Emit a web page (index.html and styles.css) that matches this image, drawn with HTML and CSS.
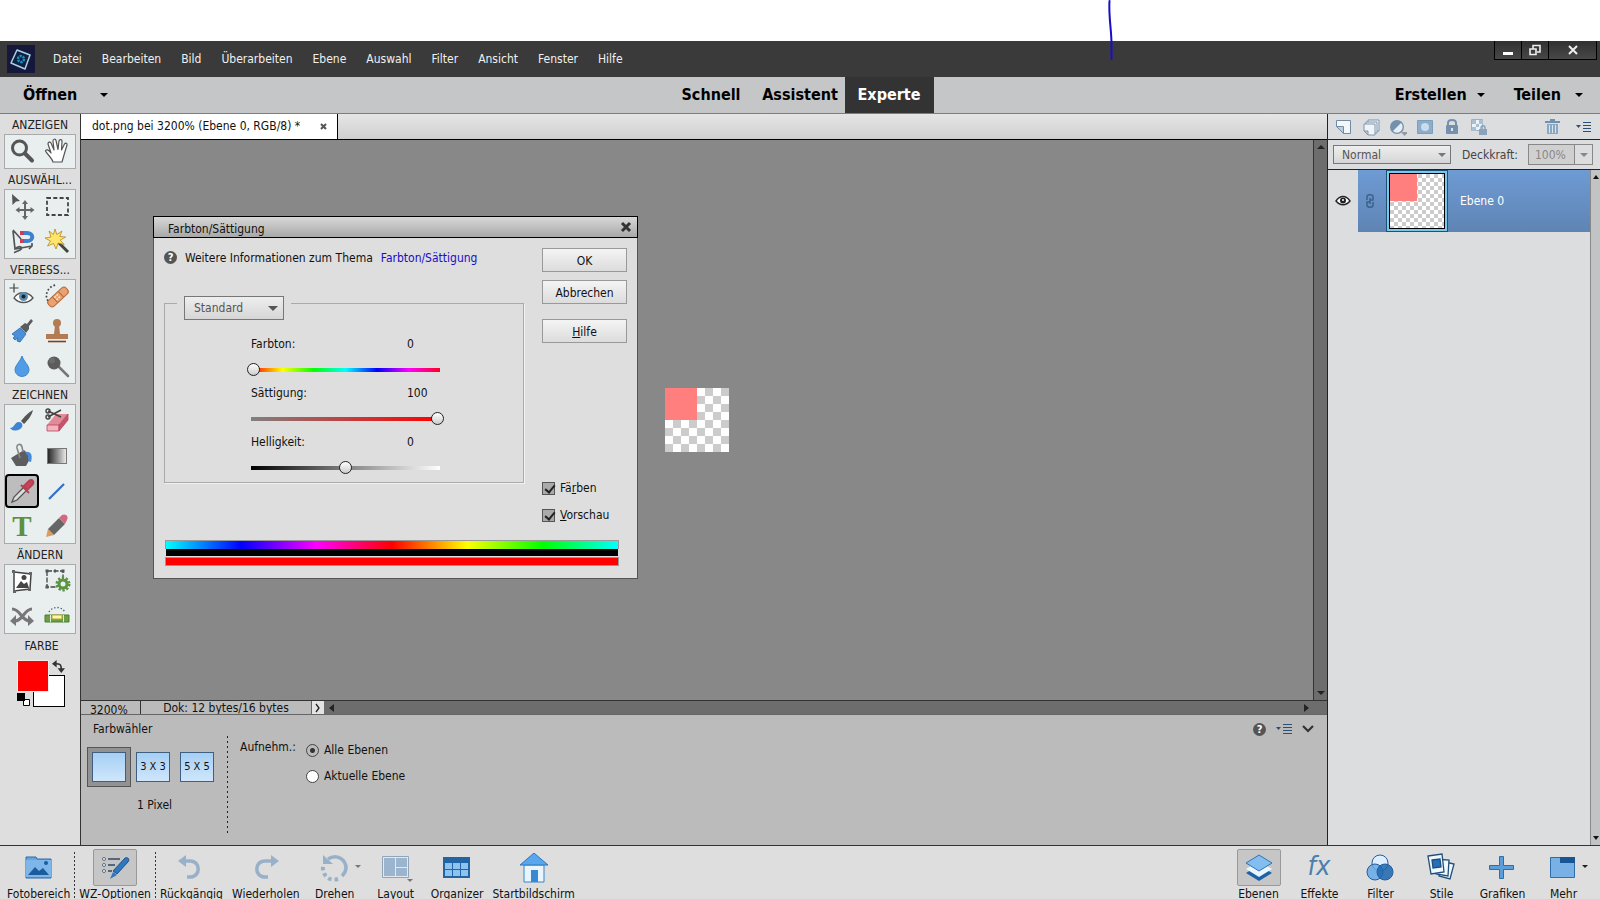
FILE: index.html
```html
<!DOCTYPE html>
<html lang="de">
<head>
    <meta charset="UTF-8">
    <meta name="viewport" content="width=device-width, initial-scale=1.0">
    <title>dot.png bei 3200% (Ebene 0, RGB/8)</title>
    <link rel="stylesheet" href="styles.css">
</head>
<body>

    <svg class="pen-mark" viewBox="0 0 8 62" aria-hidden="true"><path d="M2.500 1C1.500 16 4.500 30 4.500 44V59" fill="none" stroke="#1a0cc8" stroke-width="2" stroke-linecap="round"/></svg>

    <header class="menubar">
        <svg class="logo" viewBox="0 0 28 28" aria-hidden="true">
            <rect width="28" height="28" fill="#15183a"/>
            <path d="M10 5l13 5-5 14-14-6z" fill="#0e2240" stroke="#a9d0ea" stroke-width="1.500" stroke-linejoin="round"/>
            <circle cx="14" cy="14" r="3" fill="none" stroke="#1b8fc4" stroke-width="2.500" stroke-dasharray="2.200 .9"/>
        </svg>
        <nav class="menu">
            <a href="#">Datei</a>
            <a href="#">Bearbeiten</a>
            <a href="#">Bild</a>
            <a href="#">Überarbeiten</a>
            <a href="#">Ebene</a>
            <a href="#">Auswahl</a>
            <a href="#">Filter</a>
            <a href="#">Ansicht</a>
            <a href="#">Fenster</a>
            <a href="#">Hilfe</a>
        </nav>
        <div class="window-controls">
            <button aria-label="Minimieren"><svg width="12" height="12" viewBox="0 0 12 12"><path d="M1 9.500h10" stroke="#fff" stroke-width="3"/></svg></button>
            <button aria-label="Wiederherstellen"><svg width="12" height="12" viewBox="0 0 12 12" fill="none" stroke="#eee" stroke-width="1.600"><path d="M4 5V1.500h7V8H8"/><path d="M1 5h6v5.500H1z"/></svg></button>
            <button class="close" aria-label="Schließen"><svg width="12" height="12" viewBox="0 0 12 12"><path d="M2 2l8 8M10 2l-8 8" stroke="#eee" stroke-width="2"/></svg></button>
        </div>
    </header>

    <div class="modebar">
        <button class="open">Öffnen <i class="arrow"></i></button>
        <div class="modes">
            <button>Schnell</button>
            <button>Assistent</button>
            <button class="active">Experte</button>
        </div>
        <div class="mode-right">
            <button>Erstellen <i class="arrow"></i></button>
            <button class="share">Teilen <i class="arrow"></i></button>
        </div>
    </div>

    <main>
        <!-- Werkzeuge -->
        <aside class="tools">
            <h2>ANZEIGEN</h2>
            <div class="toolbox">
                <button aria-label="Zoom"><svg viewBox="0 0 30 30"><circle cx="12.500" cy="12" r="7" fill="#e9eeee" stroke="#555" stroke-width="3"/><path d="M18 17.500l7 7" stroke="#555" stroke-width="4" stroke-linecap="round"/></svg></button>
                <button aria-label="Hand"><svg viewBox="0 0 30 30"><path d="M11 26c-1-4-6-8-7.500-11 .5-2 3-1.500 5.500 2L6 8c0-2 2-2.500 3-1l3 7-1-9c0-2 2.500-2.500 3-.5l2 9 1-8.500c.5-2 3-1.500 3 0l-.5 9 3-6c1-1.500 3-.5 2.500 1l-3 10-2 7z" fill="#fff" stroke="#555" stroke-width="1.200" stroke-linejoin="round"/></svg></button>
            </div>
            <h2>AUSWÄHL...</h2>
            <div class="toolbox">
                <button aria-label="Verschieben"><svg viewBox="0 0 30 30"><path d="M5 3l8 7-4 .5-3.500 3.500z" fill="#555"/><path d="M18 12v14M11 19h14" stroke="#666" stroke-width="2"/><path d="M18 9l3 4h-6zM18 29l3-4h-6zM8.500 19l4-3v6zM27.500 19l-4-3v6z" fill="#666"/></svg></button>
                <button aria-label="Auswahlrechteck"><svg viewBox="0 0 30 30"><rect x="5" y="7" width="21" height="17" fill="none" stroke="#444" stroke-width="1.800" stroke-dasharray="4 2.300"/></svg></button>
                <button aria-label="Magnetisches Lasso"><svg viewBox="0 0 30 30"><path d="M6 4l8 9M6 5l2 18 17-3M8 23c5-5 9-1 5 1s-6 2-5 3M25 17v3l-3 3" fill="none" stroke="#555" stroke-width="1.700"/><path d="M17 7h3c7 0 7 8 0 8h-3" fill="none" stroke="#3c80cf" stroke-width="4"/><path d="M13 7h4M13 15h4" stroke="#d23a55" stroke-width="4"/></svg></button>
                <button aria-label="Zauberstab"><svg viewBox="0 0 30 30"><path d="M16 16l10 10" stroke="#444" stroke-width="3"/><path d="M13 3l1.800 5.500L20 5l-2.300 5.500 6 .5-5.500 3 4 4.500-6-1.500L14 23l-2.500-5.500L5.500 20l3-5L3 12l6-1-2-6 4.500 3.500z" fill="#ffe56a" stroke="#b8891c" stroke-width=".8"/></svg></button>
            </div>
            <h2>VERBESS...</h2>
            <div class="toolbox">
                <button aria-label="Rote Augen entfernen"><svg viewBox="0 0 30 30"><path d="M7 2.500v9M2.500 7h9" stroke="#444" stroke-width="1.200"/><path d="M7 17c4-7 14-7 19 0-5 6-14 6-19 0z" fill="#fff" stroke="#555" stroke-width="1.300"/><circle cx="16.500" cy="15.500" r="4.500" fill="#5d8cb3"/><circle cx="16.500" cy="15.500" r="2" fill="#222"/></svg></button>
                <button aria-label="Bereichsreparatur"><svg viewBox="0 0 30 30"><path d="M6 20C2 14 6 5 14 4" fill="none" stroke="#444" stroke-width="1.700" stroke-dasharray="1.700 2"/><g transform="rotate(-43 16 16)"><rect x="4" y="12" width="24" height="8" rx="3" fill="#e8a273" stroke="#b66b3b"/><path d="M12 12v8M20 12v8" stroke="#b66b3b"/><path d="M13 14h6M13 17h6" stroke="#fff1dd" stroke-width="1.500" stroke-dasharray="1.500"/></g></svg></button>
                <button aria-label="Smartpinsel"><svg viewBox="0 0 30 30"><path d="M5 18l8-6 6 6-6 8-3-1 1-3-3 2-2-2 2-2z" fill="#4a8fd8" stroke="#286ab0" stroke-width=".8"/><path d="M13 11l5-4 2 1 4-5 2 2-4 5v3l-3 4z" fill="#5c5c5c"/></svg></button>
                <button aria-label="Kopierstempel"><svg viewBox="0 0 30 30"><circle cx="15" cy="7" r="4" fill="#b27b54"/><path d="M13 9h4l1 9h8v5H4v-5h8z" fill="#b27b54"/><path d="M6 25.500h18" stroke="#7a4522" stroke-width="1.600"/></svg></button>
                <button aria-label="Weichzeichner"><svg viewBox="0 0 30 30"><path d="M15 5c2 6 7 9 7 14a7 6.500 0 0 1-14 0c0-5 5-8 7-14z" fill="#519ce6" stroke="#2d76bd" stroke-width=".8"/></svg></button>
                <button aria-label="Schwamm"><svg viewBox="0 0 30 30"><path d="M16 15l10 10" stroke="#777" stroke-width="2.500" stroke-linecap="round"/><circle cx="12" cy="12" r="6.500" fill="#5c5c5c"/><circle cx="10" cy="9.500" r="3" fill="#6c6c6c"/></svg></button>
            </div>
            <h2>ZEICHNEN</h2>
            <div class="toolbox">
                <button aria-label="Pinsel"><svg viewBox="0 0 30 30"><path d="M26 4c-4 2-9 7-12 11l3 3c4-4 8-9 9-14z" fill="#555"/><path d="M3 22c5 0 4-6 9-6 3 0 4 3 3 5-2 4-9 5-12 1z" fill="#3e84d2"/></svg></button>
                <button aria-label="Radiergummi"><svg viewBox="0 0 30 30"><path d="M5 19l9-11h12l-9 11z" fill="#e28a98"/><path d="M5 19h12v6H5z" fill="#f3b4be" stroke="#b64560" stroke-width=".8"/><path d="M17 19l9-11v6l-9 11z" fill="#c9526a" stroke="#b64560" stroke-width=".8"/><path d="M6 5l13 6M6 11l13-7" stroke="#444" stroke-width="1.600"/><circle cx="6" cy="5" r="2" fill="none" stroke="#444" stroke-width="1.400"/><circle cx="6" cy="11" r="2" fill="none" stroke="#444" stroke-width="1.400"/></svg></button>
                <button aria-label="Füllwerkzeug"><svg viewBox="0 0 30 30"><path d="M4 17l13-8 7 7-5 9H9z" fill="#5d5d5d"/><path d="M13 17L10 7c-1-4 4-5 5-1l1 5" fill="none" stroke="#888" stroke-width="1.600"/><path d="M18 11c6-1 8 3 6 10-3 0-3-3-3-6z" fill="#438bd9"/></svg></button>
                <button aria-label="Verlauf"><svg viewBox="0 0 30 30"><defs><linearGradient id="toolGrad"><stop offset="0" stop-color="#222"/><stop offset="1" stop-color="#eee"/></linearGradient></defs><rect x="5.500" y="7.500" width="19" height="15" fill="url(#toolGrad)" stroke="#777"/></svg></button>
                <button class="selected" aria-label="Farbwähler"><svg viewBox="0 0 30 30"><path d="M5 26l2-5 10-10 3 3-10 10z" fill="#ddd" stroke="#555" stroke-width="1.300"/><path d="M14 9l8 8M17 10l5-5c3-3 6 1 3 4l-5 5z" fill="#c8455a" stroke="#b83f53" stroke-width="2"/></svg></button>
                <button aria-label="Linie"><svg viewBox="0 0 30 30"><path d="M7 23L22 8" stroke="#2f6fc6" stroke-width="2.200"/></svg></button>
                <button aria-label="Text"><svg viewBox="0 0 30 30"><text x="15" y="25" text-anchor="middle" class="glyph-t">T</text></svg></button>
                <button aria-label="Buntstift"><svg viewBox="0 0 30 30"><path d="M4 26l2-8 6 6z" fill="#d99c62"/><path d="M6 18l11-11 6 6-11 11z" fill="#666"/><path d="M17 7l3-3c4-2 7 2 5 5l-2 4z" fill="#d16a7f"/></svg></button>
            </div>
            <h2>ÄNDERN</h2>
            <div class="toolbox">
                <button aria-label="Neu zusammensetzen"><svg viewBox="0 0 30 30" fill="none" stroke="#444" stroke-width="1.500"><path d="M7 6l17 2-1 15-16 2z" fill="#fff"/><path d="M9 22l5-7 3 3 3-2 2 6z" fill="#444" stroke="none"/><circle cx="17" cy="11.500" r="2.500" fill="#444" stroke="none"/><path d="M5 4h3v3H5zM22 6h3v3h-3zM21 22h3v3h-3zM6 24h3v3H6z" fill="#666" stroke="none"/></svg></button>
                <button aria-label="Freistellen"><svg viewBox="0 0 30 30"><path d="M5 5h16v8M5 5v16h9" fill="none" stroke="#444" stroke-width="1.300" stroke-dasharray="5 1.500"/><path d="M3.500 3.500h3v3h-3zM19.500 3.500h3v3h-3zM3.500 19.500h3v3h-3zM12 3.500h2v3h-2z" fill="#555"/><circle cx="21" cy="18" r="5.500" fill="#5b9342"/><circle cx="21" cy="18" r="6" fill="none" stroke="#5b9342" stroke-width="3" stroke-dasharray="2.200 1.570"/><circle cx="21" cy="18" r="2.500" fill="#e9eeee"/></svg></button>
                <button aria-label="Inhaltssensitives Verschieben"><svg viewBox="0 0 30 30" fill="none" stroke="#777" stroke-width="3"><path d="M5 8c9 0 9 12 18 12M25 8c-8 0-9 12-17 12"/><path d="M21 14l6 6-6 5zM9 14l-6 6 6 5z" fill="#777" stroke="none"/></svg></button>
                <button aria-label="Gerade-ausrichten"><svg viewBox="0 0 30 30"><path d="M7 11c4-6 12-6 16 0" fill="none" stroke="#35597d" stroke-width="1.300" stroke-dasharray="1.300 2"/><path d="M3 14h24v7H3z" fill="#6c9f45" stroke="#4f7d2e"/><path d="M10 14h10v4h-10z" fill="#fff6a8" stroke="#b2a43c"/><path d="M8.500 14v7M21.500 14v7" stroke="#dfe9d5"/></svg></button>
            </div>
            <h2 class="color-title">FARBE</h2>
            <div class="swatches">
                <span class="bg-color"></span>
                <span class="fg-color"></span>
                <svg class="swap" viewBox="0 0 14 14"><path d="M4 4c5 0 6 1 6 6" fill="none" stroke="#333" stroke-width="1.800"/><path d="M0 4l5-4v8zM10 14L6 9h8z" fill="#333"/></svg>
                <svg class="reset" viewBox="0 0 14 14"><path d="M6.500 6.500h6v6h-6z" fill="#fff" stroke="#000"/><path d="M0 0h8v8H0z"/></svg>
            </div>
        </aside>

        <!-- Dokument -->
        <section class="document">
            <div class="tabs">
                <div class="tab">dot.png bei 3200% (Ebene 0, RGB/8) * <button aria-label="Tab schließen"><svg width="7" height="7" viewBox="0 0 7 7"><path d="M1 1l5 5M6 1L1 6" stroke="#555" stroke-width="2"/></svg></button></div>
            </div>

            <div class="canvas-row">
                <div class="canvas">
                    <div class="artwork checker"></div>

                    <form class="dialog" role="dialog" aria-labelledby="dialog-title">
                        <div class="dialog-title">
                            <span id="dialog-title">Farbton/Sättigung</span>
                            <button type="button" aria-label="Schließen"><svg width="12" height="12" viewBox="0 0 12 12"><path d="M2 2l8 8M10 2l-8 8" stroke="#333" stroke-width="3"/></svg></button>
                        </div>
                        <div class="dialog-body">
                            <div class="dialog-main">
                                <p class="help-line"><span class="help">?</span><span>Weitere Informationen zum Thema</span> <a href="#">Farbton/Sättigung</a></p>
                                <fieldset>
                                    <legend>
                                        <select aria-label="Bereich" class="select-range"><option>Standard</option></select>
                                    </legend>
                                    <div class="slider-row">
                                        <label for="hue">Farbton:</label><output for="hue">0</output>
                                        <input type="range" id="hue" class="hue" min="0" max="360" value="0">
                                    </div>
                                    <div class="slider-row">
                                        <label for="sat">Sättigung:</label><output for="sat">100</output>
                                        <input type="range" id="sat" class="sat" min="0" max="100" value="100">
                                    </div>
                                    <div class="slider-row">
                                        <label for="light">Helligkeit:</label><output for="light">0</output>
                                        <input type="range" id="light" class="light" min="-100" max="100" value="0">
                                    </div>
                                </fieldset>
                            </div>
                            <div class="dialog-side">
                                <button type="button">OK</button>
                                <button type="button">Abbrechen</button>
                                <button type="button" class="spaced"><u>H</u>ilfe</button>
                                <div class="checks">
                                    <label><input type="checkbox" checked> <span>Fä<u>r</u>ben</span></label>
                                    <label><input type="checkbox" checked> <span><u>V</u>orschau</span></label>
                                </div>
                            </div>
                        </div>
                        <div class="strips">
                            <div class="strip-hue"></div>
                            <div class="strip-black"></div>
                            <div class="strip-red"></div>
                        </div>
                    </form>
                </div>
                <div class="vscroll"><i class="arrow up"></i><i class="arrow"></i></div>
            </div>

            <div class="statusbar">
                <span class="zoom">3200%</span>
                <span class="docsize">Dok: 12 bytes/16 bytes</span>
                <button class="status-more" aria-label="Mehr"><svg width="6" height="10" viewBox="0 0 6 10"><path d="M1 1l3 4-3 4" fill="none" stroke="#222" stroke-width="1.300"/></svg></button>
                <div class="hscroll"><i class="arrow left"></i><i class="arrow right"></i></div>
            </div>

            <div class="options">
                <div class="options-head">
                    <span>Farbwähler</span>
                    <div class="options-icons">
                        <span class="help">?</span>
                        <svg width="16" height="12" viewBox="0 0 16 12"><path d="M0 4h5L2.500 7z" fill="#2c4f7a"/><path d="M7 1.500h9M7 4.500h9M7 7.500h9M7 10.500h9" stroke="#2c4f7a"/></svg>
                        <svg width="12" height="8" viewBox="0 0 12 8"><path d="M1 1l5 5 5-5" fill="none" stroke="#333" stroke-width="2.200"/></svg>
                    </div>
                </div>
                <div class="options-body">
                    <div class="samples">
                        <div class="sample-buttons">
                            <button class="active" aria-label="1 Pixel"><span></span></button>
                            <button><span>3 X 3</span></button>
                            <button><span>5 X 5</span></button>
                        </div>
                        <p>1 Pixel</p>
                    </div>
                    <div class="sample-layers">
                        <span>Aufnehm.:</span>
                        <div>
                            <label><input type="radio" name="layers" checked> Alle Ebenen</label>
                            <label><input type="radio" name="layers"> Aktuelle Ebene</label>
                        </div>
                    </div>
                </div>
            </div>
        </section>

        <!-- Ebenenbedienfeld -->
        <aside class="layers">
            <div class="layer-icons">
                <button aria-label="Neue Ebene"><svg viewBox="0 0 18 18"><path d="M1.500 2.500h14v13h-7l-7-7z" fill="#f4f7fa" stroke="#6f8ba6"/><path d="M1.500 8.500h7v7z" fill="#bccddd" stroke="#6f8ba6"/></svg></button>
                <button aria-label="Neue Gruppe"><svg viewBox="0 0 18 18" fill="#f1f4f7" stroke="#7d96ae"><path d="M6 2h11v11H6z"/><path d="M4 4h11v11H4z"/><path d="M2 6h11v11H6l-4-4z"/><path d="M2 13h4v4z" fill="#bccddd"/></svg></button>
                <button aria-label="Einstellungsebene"><svg viewBox="0 0 18 18"><circle cx="8" cy="9" r="7" fill="#7390ac"/><path d="M12 5a5.500 5.500 0 0 1-8 8z" fill="#e6eef5"/><path d="M12 14h7l-3.500 4z" fill="#999"/></svg></button>
                <button aria-label="Ebenenmaske"><svg viewBox="0 0 18 18"><path d="M1.500 2.500h15v13h-15z" fill="#8cadcb" stroke="#7c9fbf"/><circle cx="9" cy="9" r="4" fill="#c9dcec"/></svg></button>
                <button aria-label="Alle sperren"><svg viewBox="0 0 18 18"><path d="M5 9V5c0-4 8-4 8 0v4" fill="none" stroke="#7390ac" stroke-width="2"/><rect x="3" y="7" width="12" height="9" rx="1" fill="#7390ac"/><path d="M9 10v3" stroke="#dce5ec" stroke-width="2"/></svg></button>
                <button aria-label="Transparente Pixel sperren"><svg viewBox="0 0 18 18"><path d="M1.500 1.500h11v11h-11z" fill="#edf2f6" stroke="#9ab0c5"/><path d="M2 2h4v4H2zM9 2h4v4H9zM6 6h3v3H6zM2 9h4v4H2z" fill="#a9bfd3"/><path d="M11 12v-2c0-3 4-3 4 0v2" fill="none" stroke="#8aa3bb" stroke-width="1.500"/><path d="M9 11h8v6H9z" fill="#8aa3bb"/></svg></button>
                <button class="trash" aria-label="Löschen"><svg viewBox="0 0 18 18"><path d="M1 4h15M6 2h5" stroke="#7390ac" stroke-width="2"/><path d="M3 6h11v10H3z" fill="#8aa8c4"/><path d="M5.500 7v8M8.500 7v8M11.500 7v8" stroke="#d8e3ec"/></svg></button>
                <button aria-label="Bedienfeldmenü"><svg viewBox="0 0 18 18"><path d="M1 7h5l-2.500 3z" fill="#2c4f7a"/><path d="M8 4.500h8M8 7.500h8M8 10.500h8M8 13.500h8" stroke="#2c4f7a"/></svg></button>
            </div>
            <div class="blend">
                <select aria-label="Mischmodus" class="select-blend"><option>Normal</option></select>
                <label for="opacity">Deckkraft:</label>
                <div class="opacity">
                    <input type="text" id="opacity" value="100%">
                    <button aria-label="Deckkraft wählen"><i class="arrow"></i></button>
                </div>
            </div>
            <div class="layer-area">
                <div class="layer-list">
                    <div class="layer">
                        <button class="eye" aria-label="Sichtbar"><svg width="16" height="12" viewBox="0 0 16 12"><path d="M1 6c4-6 10-6 14 0-4 5-10 5-14 0z" fill="#fff" stroke="#222" stroke-width="1.400"/><circle cx="8" cy="5.500" r="3" fill="#222"/><circle cx="8" cy="5" r="1" fill="#fff"/></svg></button>
                        <div class="layer-row">
                            <svg width="8" height="14" viewBox="0 0 8 14" fill="none" stroke="#3f648f" stroke-width="1.600"><path d="M1 6V3c0-3 6-3 6 0v3H4M7 8v3c0 3-6 3-6 0V8h3M4 4v6"/></svg>
                            <span class="thumb"><span class="checker"></span></span>
                            <span>Ebene 0</span>
                        </div>
                    </div>
                </div>
                <div class="panel-scroll"><i class="arrow up"></i><i class="arrow"></i></div>
            </div>
        </aside>
    </main>

    <footer class="taskbar">
        <div class="task-left">
            <button><span class="ico"><svg viewBox="0 0 30 30"><path d="M2 4h10l1 2h14v19H2z" fill="#69a5dc" stroke="#2b6aa6"/><path d="M2 7h25v17H2z" fill="#7eb6ea"/><path d="M4 22l7-8 4 4 4-3 6 7z" fill="#1c5c9c"/><circle cx="22" cy="10" r="2" fill="#1c5c9c"/></svg></span>Fotobereich</button>
            <button class="divided"><span class="ico on"><svg viewBox="0 0 30 30"><path d="M8 6h12M8 12h7M8 18h4" stroke="#56677a" stroke-width="2"/><circle cx="4" cy="6" r="1.500" fill="#fff" stroke="#56677a"/><circle cx="4" cy="12" r="1.500" fill="#fff" stroke="#56677a"/><circle cx="4" cy="18" r="1.500" fill="#fff" stroke="#56677a"/><path d="M25 5c3-1 5 1 3 4L17 21l-4-3z" fill="#3277bd" stroke="#1e558f"/><path d="M13 19l4 3-7 4z" fill="#3277bd"/></svg></span>WZ-Optionen</button>
            <button class="divided"><span class="ico faded"><svg viewBox="0 0 30 30"><path d="M5 8h9c11 0 11 16 0 16h-3" fill="none" stroke="#6c94bb" stroke-width="3.500"/><path d="M2 8l8-6v12z" fill="#6c94bb"/></svg></span>Rückgängig</button>
            <button><span class="ico faded"><svg viewBox="0 0 30 30"><path d="M23 8h-9c-11 0-11 16 0 16h3" fill="none" stroke="#6c94bb" stroke-width="3.500"/><path d="M28 8l-8-6v12z" fill="#6c94bb"/></svg></span>Wiederholen</button>
            <button><span class="ico faded has-arrow"><svg viewBox="0 0 30 30"><path d="M8 6c9-6 18 1 18 9 0 3-2 6-4 8" fill="none" stroke="#6c94bb" stroke-width="3.500"/><path d="M18 26C8 29 2 21 3 13" fill="none" stroke="#6c94bb" stroke-width="4" stroke-dasharray="3.500 3"/><path d="M3 2v9h10z" fill="#6c94bb"/></svg><i class="arrow"></i></span>Drehen</button>
            <button><span class="ico faded has-arrow low"><svg viewBox="0 0 30 30"><path d="M1.500 3.500h26v21h-26z" fill="#e8f0f7" stroke="#60809f"/><path d="M3 5h11v18H3zM15 5h11v9h-11zM15 15h11v8h-11z" fill="#6f9bc6"/></svg><i class="arrow"></i></span>Layout</button>
            <button><span class="ico"><svg viewBox="0 0 30 30"><path d="M1 4h27v21H1z" fill="#2265a5"/><path d="M3 10h7v6H3zM11 10h7v6h-7zM19 10h7v6h-7zM3 17h7v6H3zM11 17h7v6h-7zM19 17h7v6h-7z" fill="#8fc3ef"/></svg></span>Organizer</button>
            <button><span class="ico"><svg viewBox="0 0 30 30"><path d="M5 12h20v17H5z" fill="#e8f5ff" stroke="#3b84c6"/><path d="M15 0l14 12H1z" fill="#58a6ec" stroke="#2d78bd"/><path d="M12 17h7v12h-7z" fill="#3989d2"/></svg></span>Startbildschirm</button>
        </div>
        <div class="task-right">
            <button><span class="ico on"><svg viewBox="0 0 30 30"><path d="M15 12l13 8-13 8-13-8z" fill="#1c62a5"/><path d="M15 8l13 8-13 8-13-8z" fill="#e9f5ff"/><path d="M15 2l13 8-13 8-13-8z" fill="#84bdf0" stroke="#3375b0"/></svg></span>Ebenen</button>
            <button><span class="ico"><svg viewBox="0 0 30 30"><text x="14" y="22" text-anchor="middle" class="glyph-fx">fx</text></svg></span>Effekte</button>
            <button><span class="ico"><svg viewBox="0 0 30 30" stroke="#225f9c"><circle cx="14" cy="10" r="8" fill="#dceeff"/><circle cx="9" cy="19" r="8" fill="#65a9e6" fill-opacity=".85"/><circle cx="19" cy="19" r="8" fill="#1d66ae" fill-opacity=".85"/></svg></span>Filter</button>
            <button><span class="ico"><svg viewBox="0 0 30 30" fill="#eff7ff" stroke="#214e78" stroke-width="1.300"><path d="M14 8l13 3-4 15-11-3z"/><path d="M8 6l14 1-1 16-12-2z"/><path d="M1 3l14-2 2 18-13 2z"/><path d="M5 7l8-1 1 8-8 1z" fill="#236fb8"/></svg></span>Stile</button>
            <button><span class="ico"><svg viewBox="0 0 30 30"><path d="M11.500 3.500h4v9h10v4h-10v9h-4v-9h-10v-4h10z" fill="#5c9edb" stroke="#2f6fa9"/></svg></span>Grafiken</button>
            <button><span class="ico has-arrow dark"><svg viewBox="0 0 30 30"><path d="M1.500 4.500h24v20h-24z" fill="#79b1e6" stroke="#2f6fa9"/><path d="M11 4h15v6H11z" fill="#175694"/></svg><i class="arrow"></i></span>Mehr</button>
        </div>
    </footer>

</body>
</html>
```
FILE: styles.css
```css
* {
    margin: 0;
    padding: 0;
    box-sizing: border-box;
}

body {
    font-family: "DejaVu Sans Condensed", "DejaVu Sans", sans-serif;
    font-stretch: condensed;
    font-size: 12px;
    line-height: 16px;
    color: #111;
    background-color: #fff;
    display: flex;
    flex-direction: column;
    height: 100vh;
    padding-top: 41px;
    overflow: hidden;
}

button, input, select {
    font: inherit;
    color: inherit;
}

button {
    background: none;
    border: none;
    cursor: pointer;
}

a {
    text-decoration: none;
}

svg {
    display: block;
}

.arrow {
    display: block;
    border: 4px solid transparent;
    border-top-color: currentColor;
    border-bottom: none;
}

.arrow.up {
    border-top: none;
    border-bottom: 4px solid currentColor;
}

.arrow.left, .arrow.right {
    border: 4px solid transparent;
    border-right: 5px solid currentColor;
    border-left: none;
}

.arrow.right {
    border-left: 5px solid currentColor;
    border-right: none;
}

.checker {
    background:
        linear-gradient(#ff7f7f, #ff7f7f) 0 0 / 50% 50% no-repeat,
        conic-gradient(#ccc 25%, #fff 0 50%, #ccc 0 75%, #fff 0) 0 0 / 16px 16px;
}

.help {
    width: 13px;
    height: 13px;
    border-radius: 50%;
    background-color: #555;
    color: #fff;
    font-size: 11px;
    font-weight: bold;
    line-height: 13px;
    text-align: center;
}

.pen-mark {
    position: absolute;
    top: 0;
    left: 1107px;
    width: 8px;
    height: 62px;
}

/* menu bar */
.menubar {
    display: flex;
    align-items: center;
    height: 36px;
    flex-shrink: 0;
    background-color: #3a3a3a;
    padding: 0 3px 0 7px;
}

.logo {
    width: 28px;
    height: 28px;
}

.menu {
    display: flex;
    gap: 20px;
    margin-left: 18px;
}

.menu a {
    color: #f0f0f0;
}

.window-controls {
    display: flex;
    align-self: flex-start;
    margin-left: auto;
    border: 1px solid #000;
    border-top: none;
}

.window-controls button {
    width: 27px;
    height: 18px;
    display: flex;
    align-items: center;
    justify-content: center;
    background: linear-gradient(#303030, #484848);
    border-right: 1px solid #000;
}

.window-controls .close {
    width: 47px;
    border-right: none;
}

/* mode bar */
.modebar {
    display: grid;
    grid-template-columns: 1fr auto 1fr;
    height: 37px;
    flex-shrink: 0;
    background-color: #c5c6c7;
    border-bottom: 1px solid #7d7d7d;
    font-size: 16px;
    font-weight: bold;
}

.modebar button {
    display: flex;
    align-items: center;
    color: #000;
    padding-bottom: 1px;
}

.modebar .open {
    padding-left: 23px;
    gap: 23px;
    justify-self: start;
}

.modes {
    display: flex;
}

.modes button {
    width: 89px;
    justify-content: center;
}

.modes .active {
    background-color: #333;
    color: #fff;
}

.mode-right {
    display: flex;
    justify-content: flex-end;
    gap: 29px;
    padding-right: 17px;
}

.mode-right button {
    gap: 10px;
}

.mode-right .share {
    gap: 14px;
}

main {
    flex: 1;
    min-height: 0;
    display: grid;
    grid-template-columns: 81px minmax(0, 1fr) 273px;
}

/* tools */
.tools {
    background-color: #dedede;
    border-right: 1px solid #333;
    padding: 0 4px;
}

.tools h2 {
    height: 20px;
    line-height: 22px;
    font-size: 12px;
    font-weight: normal;
    text-align: center;
    color: #222;
}

.toolbox {
    display: grid;
    grid-template-columns: 35px 35px;
    grid-auto-rows: 35px;
    background-color: #e9eeee;
    outline: 1px solid #aaa;
    outline-offset: -1px;
    width: 72px;
}

.toolbox button {
    display: flex;
    align-items: center;
    justify-content: center;
    padding-bottom: 1px;
}

.toolbox svg {
    width: 30px;
    height: 30px;
    flex-shrink: 0;
}

.toolbox .selected {
    border: 2px solid #000;
    border-radius: 4px;
    background-color: #bdbdbd;
    margin: 0 0 1px 1px;
}

.glyph-t {
    font: bold 29px "Liberation Serif", serif;
    fill: #5d9140;
}

.tools .color-title {
    height: 26px;
    line-height: 25px;
    padding-left: 3px;
}

.swatches {
    position: relative;
    width: 48px;
    height: 47px;
    margin: 0 0 0 13px;
}

.swatches > * {
    position: absolute;
}

.fg-color {
    top: 0;
    left: 0;
    width: 32px;
    height: 32px;
    background-color: #f00;
    border: 1px solid #eee;
}

.bg-color {
    right: 0;
    bottom: 0;
    width: 32px;
    height: 32px;
    background-color: #fff;
    border: 1px solid #000;
}

.swap {
    top: 0;
    right: 0;
    width: 13px;
    height: 13px;
}

.reset {
    left: 0;
    bottom: 0;
    width: 14px;
    height: 14px;
}

/* document */
.document {
    display: flex;
    flex-direction: column;
    min-height: 0;
}

.tabs {
    display: flex;
    height: 26px;
    background: linear-gradient(#e6e6e6, #cfcfcf);
    border-bottom: 1px solid #000;
}

.tab {
    display: flex;
    align-items: center;
    justify-content: space-between;
    min-width: 257px;
    padding: 0 10px 1px 11px;
    background-color: #fff;
    border-right: 1px solid #000;
}

.canvas-row {
    flex: 1;
    display: flex;
    min-height: 0;
}

.canvas {
    position: relative;
    flex: 1;
    display: flex;
    align-items: center;
    justify-content: center;
    background-color: #888;
}

.artwork {
    width: 64px;
    height: 64px;
}

.vscroll, .panel-scroll {
    display: flex;
    flex-direction: column;
    justify-content: space-between;
    align-items: center;
    padding: 5px 0;
}

.vscroll {
    width: 14px;
    background-color: #6d6d6d;
    border-left: 1px solid #333;
    color: #222;
}

.statusbar {
    display: flex;
    height: 15px;
    line-height: 14px;
    background-color: #bbb;
    border-top: 1px solid #333;
    border-bottom: 1px solid #666;
    overflow: hidden;
}

.zoom {
    width: 60px;
    padding: 2px 0 0 9px;
    border-right: 1px solid #333;
}

.docsize {
    width: 170px;
    text-align: center;
}

.status-more {
    width: 13px;
    display: flex;
    align-items: center;
    justify-content: center;
    background-color: #e4e4e4;
    border-left: 1px solid #666;
}

.hscroll {
    flex: 1;
    display: flex;
    align-items: center;
    justify-content: space-between;
    background-color: #6d6d6d;
    color: #222;
    padding: 0 18px 0 5px;
}

/* dialog */
.dialog {
    position: absolute;
    top: 76px;
    left: 72px;
    width: 485px;
    background-color: #dedede;
    border: 1px solid #555;
    padding-bottom: 12px;
}

.dialog-title {
    display: flex;
    justify-content: space-between;
    align-items: center;
    height: 22px;
    margin: -1px -1px 0;
    padding: 0 5px 0 14px;
    background: linear-gradient(#d8d8d8, #a8a8a8);
    border: 1px solid #000;
}

.dialog-title span {
    padding-top: 3px;
}

.dialog-body {
    display: flex;
    justify-content: space-between;
    padding: 10px;
    padding-bottom: 0;
}

.help-line {
    display: flex;
    align-items: center;
    gap: 8px;
    height: 19px;
}

.help-line a {
    color: #1a0cc8;
}

.dialog-main {
    width: 360px;
}

fieldset {
    border: 1px solid #aaa;
    box-shadow: 1px 1px 0 #f2f2f2;
    margin-top: 29px;
    height: 187px;
    padding: 26px 0 0 82px;
}

legend {
    position: relative;
    height: 14px;
    margin-left: -70px;
    padding: 0 7px;
}

legend::after {
    content: "";
    position: absolute;
    right: 13px;
    top: 10px;
    border: 5px solid transparent;
    border-top-color: #555;
    border-bottom: none;
    pointer-events: none;
}

select {
    appearance: none;
    border: 1px solid #777;
    border-radius: 0;
    background: linear-gradient(#eee, #d6d6d6);
    color: #555;
}

.select-range {
    display: block;
    width: 100px;
    height: 24px;
    padding-left: 9px;
}

.slider-row {
    display: grid;
    grid-template-columns: 156px 40px;
    height: 49px;
    padding-left: 4px;
    align-content: start;
}

.slider-row input {
    appearance: none;
    grid-column: 1 / 3;
    width: 197px;
    height: 13px;
    margin: 11px 0 0 -4px;
    background: none;
}

.slider-row input::-webkit-slider-runnable-track {
    height: 13px;
    background: var(--track) center / 189px 4px no-repeat;
}

.slider-row input::-webkit-slider-thumb {
    appearance: none;
    width: 13px;
    height: 13px;
    border-radius: 50%;
    border: 1px solid #222;
    background: linear-gradient(#fff, #ccc);
}

.hue {
    --track: linear-gradient(to right, #f00, #ff0, #0f0, #0ff, #00f, #f0f, #f02);
}

.sat {
    --track: linear-gradient(to right, #808080, #f00);
}

.light {
    --track: linear-gradient(to right, #000, #fff);
}

.dialog-side {
    width: 85px;
    display: flex;
    flex-direction: column;
    gap: 8px;
}

.dialog-side button {
    height: 24px;
    padding-top: 1px;
    background: linear-gradient(#f4f4f4, #dcdcdc);
    border: 1px solid #999;
}

.dialog-side .spaced {
    margin-top: 7px;
}

.checks {
    display: flex;
    flex-direction: column;
    gap: 11px;
    margin-top: auto;
    margin-bottom: -40px;
}

.checks label, .sample-layers label {
    display: flex;
    align-items: center;
    gap: 5px;
}

input[type="checkbox"] {
    appearance: none;
    width: 13px;
    height: 13px;
    border: 1px solid #555;
    background-color: #aaa;
    position: relative;
}

input[type="checkbox"]:checked::after {
    content: "";
    position: absolute;
    left: 4px;
    top: 0;
    width: 4px;
    height: 8px;
    border: solid #222;
    border-width: 0 2px 2px 0;
    transform: rotate(40deg);
}

.strips {
    margin: 57px 18px 0 11px;
}

.strip-hue, .strip-red {
    height: 9px;
    border: 1px solid #999;
}

.strip-hue {
    background: linear-gradient(to right, #0ff, #00f, #f0f, #f00, #ff0, #0f0, #0ff);
    border-bottom: none;
}

.strip-black {
    height: 7px;
    margin: 0 1px 1px;
    background-color: #000;
}

.strip-red {
    background-color: #f00;
}

/* tool options */
.options {
    height: 130px;
    background-color: #bbb;
    padding: 6px 13px 0 6px;
}

.options-head {
    display: flex;
    justify-content: space-between;
    padding-left: 6px;
    height: 16px;
}

.options-icons {
    display: flex;
    align-items: center;
    gap: 10px;
}

.options-body {
    display: flex;
    margin-top: -1px;
}

.samples {
    width: 141px;
    height: 100px;
    padding-top: 11px;
    background: linear-gradient(#222 2px, transparent 2px) right top / 1px 5px repeat-y;
}

.sample-buttons {
    display: flex;
}

.sample-buttons button {
    width: 44px;
    height: 40px;
    padding: 4px;
    border: 1px solid transparent;
    font-size: 11px;
}

.sample-buttons .active {
    background-color: #929292;
    border-color: #555;
}

.sample-buttons span {
    display: block;
    height: 30px;
    line-height: 28px;
    background: linear-gradient(#a5cff5, #cfe6fb);
    border: 1px solid #3f5f80;
}

.samples p {
    text-align: center;
    padding-top: 10px;
    margin-right: 6px;
}

.sample-layers {
    display: flex;
    gap: 10px;
    padding: 3px 0 0 12px;
}

.sample-layers div {
    display: flex;
    flex-direction: column;
    gap: 10px;
    padding-top: 3px;
}

input[type="radio"] {
    appearance: none;
    width: 13px;
    height: 13px;
    border: 1px solid #444;
    border-radius: 50%;
    background-color: #fff;
}

input[type="radio"]:checked {
    background: radial-gradient(#333 0 2px, #bbb 3px);
}

/* layers panel */
.layers {
    display: flex;
    flex-direction: column;
    background-color: #dcddde;
    border-left: 1px solid #222;
    min-height: 0;
}

.layer-icons {
    display: flex;
    align-items: center;
    gap: 9px;
    height: 26px;
    padding: 0 7px;
    border-bottom: 1px solid #222;
}

.layer-icons svg {
    width: 18px;
    height: 18px;
}

.layer-icons .trash {
    margin-left: auto;
    margin-right: 4px;
}

.blend {
    position: relative;
    display: flex;
    align-items: center;
    height: 30px;
    padding: 0 7px 0 5px;
    border-bottom: 1px solid #222;
    color: #444;
}

.select-blend {
    width: 118px;
    height: 19px;
    padding-left: 8px;
    margin-right: 11px;
}

.blend::after {
    content: "";
    position: absolute;
    left: 110px;
    top: 13px;
    border: 4px solid transparent;
    border-top-color: #777;
    border-bottom: none;
    pointer-events: none;
}

.opacity {
    display: flex;
    margin-left: auto;
    height: 21px;
    border: 1px solid #888;
    color: #888;
}

.opacity input {
    width: 45px;
    border: none;
    background-color: #d0d0d0;
    padding-left: 6px;
}

.opacity button {
    width: 18px;
    display: flex;
    align-items: center;
    justify-content: center;
    border-left: 1px solid #888;
}

.layer-area {
    flex: 1;
    display: flex;
    min-height: 0;
}

.layer-list {
    flex: 1;
}

.layer {
    display: flex;
    height: 62px;
}

.eye {
    width: 30px;
    display: flex;
    align-items: center;
    justify-content: center;
}

.layer-row {
    flex: 1;
    display: flex;
    align-items: center;
    padding-left: 8px;
    background: linear-gradient(#6e9bd4, #5f84b4);
    color: #fff;
}

.thumb {
    width: 62px;
    height: 62px;
    margin: 0 12px;
    padding: 2px;
    background-color: #7cc8ea;
    border: 1px solid #1c5276;
}

.thumb .checker {
    display: block;
    height: 56px;
    border: 1px solid #000;
    background-size: 50% 50%, 8px 8px;
    background-origin: content-box;
}

.panel-scroll {
    width: 10px;
    background-color: #c2c3c4;
    border-left: 1px solid #888;
}

.panel-scroll .arrow {
    border-left-width: 3px;
    border-right-width: 3px;
}

/* task bar */
.taskbar {
    display: flex;
    justify-content: space-between;
    height: 54px;
    flex-shrink: 0;
    background-color: #dedede;
    border-top: 1px solid #333;
    padding: 3px 6px 0 7px;
}

.task-left, .task-right {
    display: flex;
    align-items: flex-start;
}

.task-left {
    gap: 9px;
}

.taskbar button {
    position: relative;
    display: flex;
    flex-direction: column;
    align-items: center;
    min-width: 52px;
}

.task-right button {
    width: 61px;
}

.divided::before {
    content: "";
    position: absolute;
    left: -5px;
    top: 3px;
    height: 46px;
    width: 1px;
    background: linear-gradient(#333 2px, transparent 2px) 0 0 / 1px 4px repeat-y;
}

.ico {
    position: relative;
    width: 44px;
    height: 37px;
    display: flex;
    align-items: center;
    justify-content: center;
    border: 1px solid transparent;
    border-radius: 2px;
}

.ico.on {
    background-color: #c6c6c6;
    border-color: #999;
}

.ico svg {
    width: 30px;
    height: 30px;
}

.faded svg {
    opacity: 0.6;
}

.has-arrow .arrow {
    position: absolute;
    right: -5px;
    top: 15px;
    border-width: 3px 3px 0;
    color: #777;
}

.has-arrow.dark .arrow {
    right: -3px;
    color: #222;
}

.has-arrow.low .arrow {
    right: 4px;
    top: 29px;
}

.glyph-fx {
    font: italic 27px "DejaVu Sans Condensed", "DejaVu Sans", sans-serif;
    fill: #4c7fae;
}
```
